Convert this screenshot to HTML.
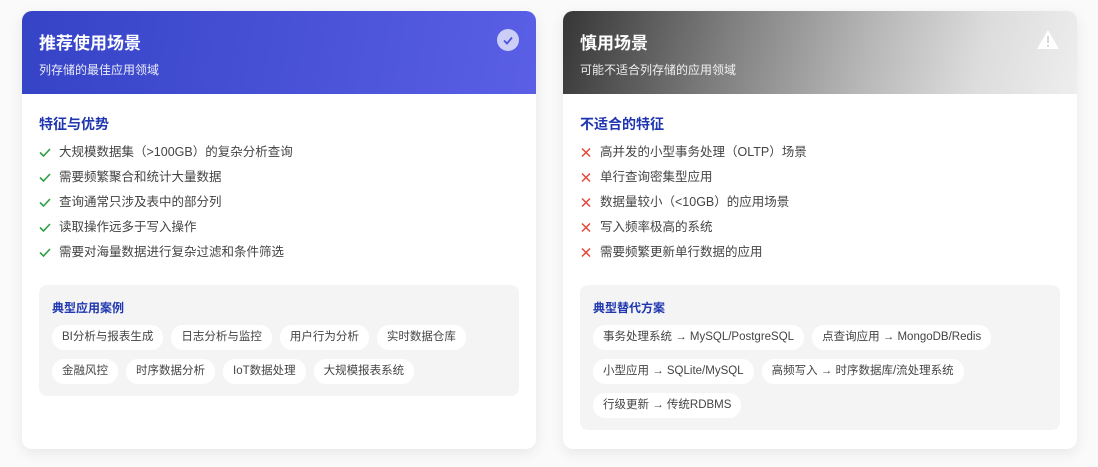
<!DOCTYPE html>
<html><head><meta charset="utf-8"><style>
*{margin:0;padding:0;box-sizing:border-box}
body{width:1098px;height:467px;background:#fafafa;font-family:"Liberation Sans","Noto Sans CJK SC",sans-serif;position:relative;overflow:hidden}
.card{position:absolute;top:11px;width:514px;height:438px;background:#fff;border-radius:10px;box-shadow:0 4px 14px rgba(0,0,0,.08);overflow:hidden}
.hd{height:83px;padding:22px 17px 0;color:#fff;position:relative}
.hd h2{font-size:17px;font-weight:700;line-height:22px}
.hd p{font-size:12px;margin-top:6px;opacity:.9}
.sec{padding:0 17px}
.sec h3{font-size:14px;color:#1f36b0;font-weight:700;margin-top:20px;line-height:20px}
ul{list-style:none;margin-top:6px}
li{font-size:12.5px;color:#444;height:25px;line-height:25px;position:relative;padding-left:20px}
li svg{position:absolute;left:0;top:7px}
.box{margin-top:20px;background:#f4f4f5;border-radius:8px;padding:14px 13px 12px}
.box h4{font-size:12px;color:#1f36b0;font-weight:700;line-height:18px}
.chips{margin-top:8px;display:flex;flex-wrap:wrap;gap:9px 8px}
.chip{background:#fff;border-radius:12px;height:25px;line-height:25px;padding:0 10px;font-size:11.5px;color:#444}
</style></head><body>
<div class="card" style="left:22px">
 <div class="hd" style="background:linear-gradient(100deg,#3543c6,#5a5fe6)">
  <h2>推荐使用场景</h2><p>列存储的最佳应用领域</p>
  <div style="position:absolute;right:17px;top:18px;width:22px;height:22px;border-radius:50%;background:rgba(255,255,255,.7)"><svg width="22" height="22"><path d="M7 11.5l3 3 5-6" stroke="#4a52d8" stroke-width="1.8" fill="none"/></svg></div>
 </div>
 <div class="sec">
  <h3>特征与优势</h3>
  <ul>
   <li><svg width="12" height="11"><path d="M1 5.5l3.5 3.5 6.5-7" stroke="#2f9e44" stroke-width="1.6" fill="none"/></svg>大规模数据集（&gt;100GB）的复杂分析查询</li>
   <li><svg width="12" height="11"><path d="M1 5.5l3.5 3.5 6.5-7" stroke="#2f9e44" stroke-width="1.6" fill="none"/></svg>需要频繁聚合和统计大量数据</li>
   <li><svg width="12" height="11"><path d="M1 5.5l3.5 3.5 6.5-7" stroke="#2f9e44" stroke-width="1.6" fill="none"/></svg>查询通常只涉及表中的部分列</li>
   <li><svg width="12" height="11"><path d="M1 5.5l3.5 3.5 6.5-7" stroke="#2f9e44" stroke-width="1.6" fill="none"/></svg>读取操作远多于写入操作</li>
   <li><svg width="12" height="11"><path d="M1 5.5l3.5 3.5 6.5-7" stroke="#2f9e44" stroke-width="1.6" fill="none"/></svg>需要对海量数据进行复杂过滤和条件筛选</li>
  </ul>
  <div class="box"><h4>典型应用案例</h4>
   <div class="chips"><span class="chip">BI分析与报表生成</span><span class="chip">日志分析与监控</span><span class="chip">用户行为分析</span><span class="chip">实时数据仓库</span><span class="chip">金融风控</span><span class="chip">时序数据分析</span><span class="chip">IoT数据处理</span><span class="chip">大规模报表系统</span></div>
  </div>
 </div>
</div>
<div class="card" style="left:563px">
 <div class="hd" style="background:linear-gradient(105deg,#363636 0%,#7f7f7f 32%,#b5b5b5 58%,#dcdcdc 80%,#eeeeee 100%)">
  <h2>慎用场景</h2><p>可能不适合列存储的应用领域</p>
  <svg style="position:absolute;right:17px;top:18px" width="24" height="21"><path d="M12 1L23 20H1z" fill="#fff" opacity=".95"/><rect x="11" y="7" width="2" height="7" fill="#d8d8d8"/><rect x="11" y="16" width="2" height="2" fill="#d8d8d8"/></svg>
 </div>
 <div class="sec">
  <h3>不适合的特征</h3>
  <ul>
   <li><svg width="12" height="11"><path d="M2 1.5l8 8M10 1.5l-8 8" stroke="#e5483b" stroke-width="1.5"/></svg>高并发的小型事务处理（OLTP）场景</li>
   <li><svg width="12" height="11"><path d="M2 1.5l8 8M10 1.5l-8 8" stroke="#e5483b" stroke-width="1.5"/></svg>单行查询密集型应用</li>
   <li><svg width="12" height="11"><path d="M2 1.5l8 8M10 1.5l-8 8" stroke="#e5483b" stroke-width="1.5"/></svg>数据量较小（&lt;10GB）的应用场景</li>
   <li><svg width="12" height="11"><path d="M2 1.5l8 8M10 1.5l-8 8" stroke="#e5483b" stroke-width="1.5"/></svg>写入频率极高的系统</li>
   <li><svg width="12" height="11"><path d="M2 1.5l8 8M10 1.5l-8 8" stroke="#e5483b" stroke-width="1.5"/></svg>需要频繁更新单行数据的应用</li>
  </ul>
  <div class="box"><h4>典型替代方案</h4>
   <div class="chips"><span class="chip">事务处理系统 → MySQL/PostgreSQL</span><span class="chip">点查询应用 → MongoDB/Redis</span><span class="chip">小型应用 → SQLite/MySQL</span><span class="chip">高频写入 → 时序数据库/流处理系统</span><span class="chip">行级更新 → 传统RDBMS</span></div>
  </div>
 </div>
</div>
</body></html>
